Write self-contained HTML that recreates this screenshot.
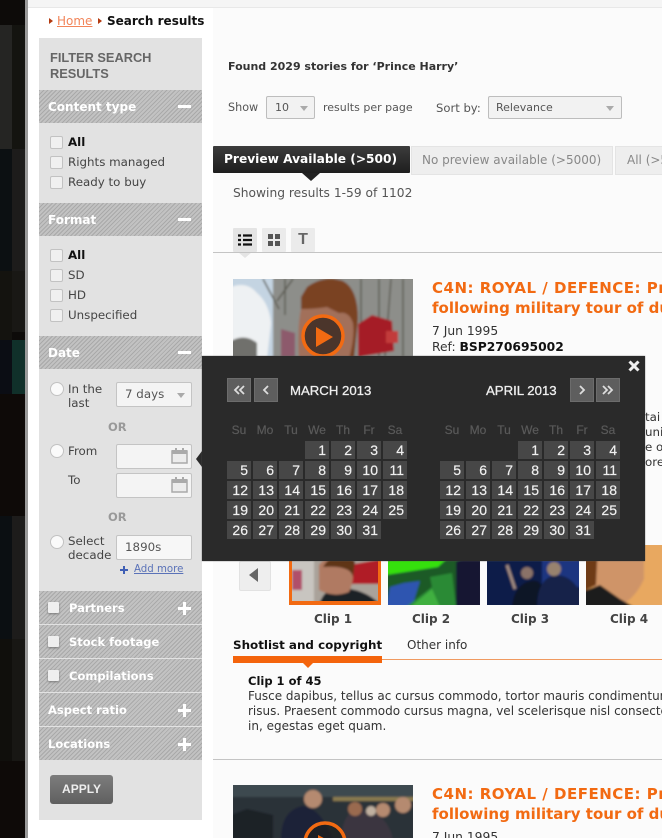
<!DOCTYPE html>
<html><head><meta charset="utf-8"><style>
html,body{margin:0;padding:0;width:662px;height:838px;overflow:hidden;background:#fff}
body{position:relative;font-family:"DejaVu Sans",Verdana,sans-serif;font-size:11.85px;color:#333}
#w{position:absolute;left:0;top:0;width:662px;height:838px;overflow:hidden}
.a{position:absolute;white-space:nowrap}
.b{position:absolute}
.hd{position:absolute;left:39px;width:163px;height:33px;background:#b4b4b4;background-image:repeating-linear-gradient(135deg,#a9a9a9 0 1px,#c2c2c2 1px 3px);color:#fff;font-weight:bold;font-size:12px;line-height:34px}
.hd span{position:absolute;left:9px;white-space:nowrap}
.min{position:absolute;left:139px;top:15px;width:13px;height:3px;background:#fff}
.pl{position:absolute;left:139px;top:16px;width:13px;height:3px;background:#fff}
.pl:after{content:"";position:absolute;left:5px;top:-5px;width:3px;height:13px;background:#fff}
.cb{position:absolute;left:50px;width:11px;height:11px;background:#f0f0f0;border:1px solid #c2c2c2;border-radius:2px}
.cb2{position:absolute;left:9px;top:11px;width:11px;height:11px;background:#efefef;border-radius:1px;box-shadow:0 1px 2px #777}
.rd{position:absolute;left:50px;width:12px;height:12px;background:#fafafa;border:1px solid #c2c2c2;border-radius:50%}
.inp{position:absolute;left:116px;width:74px;height:23px;background:#f4f4f4;border:1px solid #c4c4c4;border-radius:2px;line-height:23px;text-indent:8px;color:#555;font-size:11.85px}
.tri{position:absolute;width:0;height:0;border-left:4.5px solid transparent;border-right:4.5px solid transparent;border-top:5px solid #aaa}
.or{position:absolute;left:108px;color:#999;font-weight:bold;font-size:11.5px}
.cal{position:absolute;left:54px;top:3px}
.sel{position:absolute;background:#f2f2f2;border:1px solid #bdbdbd;border-radius:2px;color:#555;height:21px;line-height:22px;font-size:11px}
.tab{position:absolute;top:146px;height:27px;background:#eee;border:1px solid #e4e4e4;color:#888;font-size:12px;line-height:27px;text-align:left;white-space:nowrap;overflow:hidden}
.vb{position:absolute;top:228px;width:24px;height:24px;background:#ebebeb;border-radius:1px}
.ttl{color:#f26a12;font-weight:bold;font-size:15px;line-height:20px}
.ttl span{letter-spacing:.5px}
.pop{position:absolute;left:202px;top:356px;width:443px;height:205px;background:#2a2a2a;box-shadow:0 0 1px #555;font-family:"Liberation Sans",sans-serif}
.nb{position:absolute;top:22px;width:22px;height:22px;background:#5e5e5e;border:1px solid #6c6c6c}
.nb svg{position:absolute;left:0;top:0}
.mt{position:absolute;top:27px;color:#eee;font-size:13.2px;line-height:16px;white-space:nowrap;-webkit-text-stroke:.3px #eee}
.dh{position:absolute;top:67px;display:grid;grid-template-columns:repeat(7,24px);column-gap:2px;color:#5a5a5a;font-size:12px;text-align:center;line-height:14px;-webkit-text-stroke:.2px #5a5a5a}
.g{position:absolute;top:85px;display:grid;grid-template-columns:repeat(7,24px);grid-auto-rows:18px;gap:2px;color:#f0f0f0;font-size:14px;line-height:18px;text-align:right;-webkit-text-stroke:.2px #f0f0f0}
.g div{background:#474747;padding-right:3px;box-sizing:border-box}
.cl{position:absolute;top:612px;color:#444;font-weight:bold;font-size:12px;white-space:nowrap}
</style></head><body><div id="w">

<svg width="0" height="0" style="position:absolute"><filter id="s"><feGaussianBlur stdDeviation="1"/></filter></svg>

<!-- dark background strip -->
<div class="b" style="left:0;top:0;width:25px;height:838px;background:#0d0b09"></div>
<div class="b" style="left:0;top:25px;width:12px;height:124px;background:#252523"></div>
<div class="b" style="left:12px;top:25px;width:13px;height:124px;background:#141410"></div>
<div class="b" style="left:0;top:149px;width:12px;height:122px;background:#0c1012"></div>
<div class="b" style="left:12px;top:149px;width:13px;height:122px;background:#1d1c1b"></div>
<div class="b" style="left:0;top:271px;width:12px;height:123px;background:#14130f"></div>
<div class="b" style="left:12px;top:271px;width:13px;height:61px;background:#191815"></div>
<div class="b" style="left:0;top:340px;width:12px;height:54px;background:#0b0d14"></div>
<div class="b" style="left:12px;top:340px;width:13px;height:54px;background:#10302a"></div>
<div class="b" style="left:0;top:394px;width:25px;height:122px;background:#0e0a08"></div>
<div class="b" style="left:0;top:516px;width:12px;height:123px;background:#0b0f12"></div>
<div class="b" style="left:12px;top:516px;width:13px;height:123px;background:#1d1c1b"></div>
<div class="b" style="left:0;top:639px;width:25px;height:122px;background:#100f0c"></div>
<div class="b" style="left:12px;top:639px;width:13px;height:122px;background:#181714"></div>
<div class="b" style="left:0;top:761px;width:25px;height:77px;background:#0e0a08"></div>
<div class="b" style="left:25px;top:0;width:3px;height:838px;background:#9a9a9a"></div>

<!-- page -->
<div class="b" style="left:28px;top:0;width:634px;height:7px;background:#f5f5f5;border-bottom:1px solid #e8e8e8"></div>
<div class="b" style="left:213px;top:8px;width:449px;height:830px;background:#fbfbfb"></div>

<!-- breadcrumb -->
<div class="b" style="left:49px;top:18px;width:0;height:0;border-left:4px solid #b33a10;border-top:3.5px solid transparent;border-bottom:3.5px solid transparent"></div>
<div class="a" style="left:57px;top:14px;color:#f2855a;font-size:12px;text-decoration:underline">Home</div>
<div class="b" style="left:98px;top:18px;width:0;height:0;border-left:4px solid #b33a10;border-top:3.5px solid transparent;border-bottom:3.5px solid transparent"></div>
<div class="a" style="left:107px;top:14px;color:#111;font-weight:bold;font-size:12px">Search results</div>

<!-- sidebar -->
<div class="b" style="left:39px;top:38px;width:163px;height:782px;background:#e2e2e2"></div>
<div class="a" style="left:50px;top:50px;color:#666;font-weight:bold;font-size:12.8px;line-height:16px;font-family:'Liberation Sans',sans-serif">FILTER SEARCH<br>RESULTS</div>

<div class="hd" style="top:90px"><span>Content type</span><i class="min"></i></div>
<div class="cb" style="top:136px"></div><div class="a" style="left:68px;top:135px;color:#111;font-weight:bold">All</div>
<div class="cb" style="top:156px"></div><div class="a" style="left:68px;top:155px;color:#444">Rights managed</div>
<div class="cb" style="top:176px"></div><div class="a" style="left:68px;top:175px;color:#444">Ready to buy</div>

<div class="hd" style="top:203px"><span>Format</span><i class="min"></i></div>
<div class="cb" style="top:249px"></div><div class="a" style="left:68px;top:248px;color:#111;font-weight:bold">All</div>
<div class="cb" style="top:269px"></div><div class="a" style="left:68px;top:268px;color:#444">SD</div>
<div class="cb" style="top:289px"></div><div class="a" style="left:68px;top:288px;color:#444">HD</div>
<div class="cb" style="top:309px"></div><div class="a" style="left:68px;top:308px;color:#444">Unspecified</div>

<div class="hd" style="top:336px"><span>Date</span><i class="min"></i></div>
<div class="rd" style="top:382px"></div>
<div class="a" style="left:68px;top:382px;color:#444;line-height:14px">In the<br>last</div>
<div class="inp" style="top:382px">7 days<i class="tri" style="left:60px;top:10px"></i></div>
<div class="or" style="top:420px">OR</div>
<div class="rd" style="top:444px"></div>
<div class="a" style="left:68px;top:444px;color:#444">From</div>
<div class="inp" style="top:444px"><svg class="cal" width="17" height="16"><path d="M1 3h15v12H1z" fill="#ececec" stroke="#aaa" stroke-width="1.5"/><path d="M1 2h15v4H1z" fill="#aaa"/><path d="M4 0h2v3H4zM11 0h2v3h-2z" fill="#aaa"/></svg></div>
<div class="a" style="left:68px;top:473px;color:#444">To</div>
<div class="inp" style="top:473px"><svg class="cal" width="17" height="16"><path d="M1 3h15v12H1z" fill="#ececec" stroke="#aaa" stroke-width="1.5"/><path d="M1 2h15v4H1z" fill="#aaa"/><path d="M4 0h2v3H4zM11 0h2v3h-2z" fill="#aaa"/></svg></div>
<div class="or" style="top:510px">OR</div>
<div class="rd" style="top:535px"></div>
<div class="a" style="left:68px;top:534px;color:#444;line-height:14px">Select<br>decade</div>
<div class="inp" style="top:535px;background:#f7f7f7">1890s</div>
<svg class="b" style="left:119px;top:565px" width="10" height="10"><path d="M1 5h8M5 1v8" stroke="#3f5fb5" stroke-width="2"/></svg>
<div class="a" style="left:134px;top:564px;color:#5a72b8;font-size:10.2px;text-decoration:underline">Add more</div>

<div class="hd" style="top:591px"><i class="cb2"></i><span style="left:30px;font-size:11.5px">Partners</span><i class="pl"></i></div>
<div class="hd" style="top:625px"><i class="cb2"></i><span style="left:30px;font-size:11.5px">Stock footage</span></div>
<div class="hd" style="top:659px"><i class="cb2"></i><span style="left:30px;font-size:11.5px">Compilations</span></div>
<div class="hd" style="top:693px"><span style="font-size:11.5px">Aspect ratio</span><i class="pl"></i></div>
<div class="hd" style="top:727px"><span style="font-size:11.5px">Locations</span><i class="pl"></i></div>
<div class="b" style="left:50px;top:775px;width:63px;height:29px;background:linear-gradient(#7d7d7d,#5f5f5f);border-radius:3px;color:#eee;font:bold 12px/28px 'Liberation Sans',sans-serif;text-align:center">APPLY</div>

<!-- main top -->
<div class="a" style="left:228px;top:60px;color:#333;font-weight:bold;font-size:11px">Found 2029 stories for ‘Prince Harry’</div>
<div class="a" style="left:228px;top:101px;color:#555;font-size:11.2px">Show</div>
<div class="sel" style="left:266px;top:96px;width:47px;text-indent:8px">10<i class="tri" style="left:33px;top:9px"></i></div>
<div class="a" style="left:323px;top:101px;color:#555;font-size:11px">results per page</div>
<div class="a" style="left:436px;top:101px;color:#555;font-size:11.6px">Sort by:</div>
<div class="sel" style="left:488px;top:96px;width:132px;text-indent:7px">Relevance<i class="tri" style="left:117px;top:9px"></i></div>

<div class="b" style="left:213px;top:146px;width:197px;height:27px;background:linear-gradient(#3c3c3c,#1e1e1e);border-radius:1px;color:#fff;font-weight:bold;font-size:12.2px;line-height:27px;text-indent:11px;white-space:nowrap">Preview Available (&gt;500)</div>
<div class="b" style="left:302px;top:173px;width:0;height:0;border-left:9px solid transparent;border-right:9px solid transparent;border-top:8px solid #222"></div>
<div class="tab" style="left:411px;width:200px;text-indent:10px">No preview available (&gt;5000)</div>
<div class="tab" style="left:615px;width:46px;text-indent:11px;border-right:0">All (&gt;5000)</div>
<div class="a" style="left:233px;top:186px;color:#555;font-size:12.25px">Showing results 1-59 of 1102</div>

<div class="vb" style="left:233px;background:#e4e4e4">
  <svg width="24" height="24"><path d="M5 7.5h3M10 7.5h9M5 12h3M10 12h9M5 16.5h3M10 16.5h9" stroke="#111" stroke-width="2.2"/></svg>
</div>
<div class="b" style="left:238px;top:252px;width:0;height:0;border-left:7px solid transparent;border-right:7px solid transparent;border-top:6px solid #e4e4e4"></div>
<div class="vb" style="left:262px"><svg width="24" height="24"><path d="M6 6h5v5H6zM13 6h5v5h-5zM6 13h5v5H6zM13 13h5v5h-5z" fill="#555"/></svg></div>
<div class="vb" style="left:291px;color:#666;font:bold 16px/24px 'Liberation Sans',sans-serif;text-align:center">T</div>
<div class="b" style="left:213px;top:252px;width:449px;height:1px;background:#c4c4c4"></div>

<!-- result 1 -->
<svg class="b" style="left:233px;top:279px" width="180" height="78" viewBox="0 0 180 78">
<rect width="180" height="78" fill="#8d8e8a"/>
<g filter="url(#s)">
<rect width="180" height="78" fill="#8d8e8a"/>
<path d="M-2-2h42v82H-2z" fill="#c4d4e2"/>
<path d="M-2 8q16-6 26 6q12 10 14 30L34 80H-2z" fill="#eef1f3"/>
<path d="M-2 62q14-8 26 2v16H-2z" fill="#70706c"/>
<path d="M30 0l16 30M52 0v36M60 0L44 22M128 0v78M146 0v78M158 0l-6 78M170 0v78" stroke="#5c5c52" stroke-width="1.5" fill="none"/>
<path d="M48 50l14 4v24H48z" fill="#8d5a6c"/>
<path d="M125 45l14-9 20 6 2 30-36 6z" fill="#a51f25"/>
<rect x="153" y="52" width="12" height="12" fill="#c23a3a"/>
<path d="M68 80V18L74 8Q90-4 110 2Q125 10 125 40l-4 40z" fill="#7a4320"/>
<path d="M68 30q-4 20-2 50h50q6-22 4-36-4-12-14-10l-12-6q-12 2-26 2z" fill="#a2705a"/>
</g>
<circle cx="90" cy="57" r="20" fill="#2d211c" fill-opacity=".75" stroke="#f26a12" stroke-width="3.5"/>
<path d="M83 48l17 10-17 10z" fill="#f26a12"/>
</svg>
<div class="a ttl" style="left:432px;top:278px"><span>C4N: ROYAL / DEFENCE: Prince Harry</span><br>following military tour of duty</div>
<div class="a" style="left:432px;top:324px;color:#333;font-size:12.3px">7 Jun 1995</div>
<div class="a" style="left:432px;top:340px;color:#333;font-size:12.3px">Ref: <b style="color:#111">BSP270695002</b></div>

<div class="a" style="left:645px;top:410px;color:#333">tai</div>
<div class="a" style="left:645px;top:425px;color:#333">uni</div>
<div class="a" style="left:645px;top:440px;color:#333">e o</div>
<div class="a" style="left:645px;top:455px;color:#333">ore</div>

<!-- clips -->
<div class="b" style="left:239px;top:561px;width:30px;height:28px;background:#eee;border:1px solid #e2e2e2;border-radius:2px"></div>
<div class="b" style="left:249px;top:568px;width:0;height:0;border-right:9px solid #666;border-top:7.5px solid transparent;border-bottom:7.5px solid transparent"></div>

<svg class="b" style="left:289px;top:545px" width="92" height="60" viewBox="0 0 92 60">
<rect width="92" height="60" fill="#f26a12"/>
<svg x="3" y="3" width="86" height="53" viewBox="3 3 86 53"><g filter="url(#s)">
<rect x="0" y="0" width="92" height="60" fill="#a9a29a"/>
<path d="M0 0h25v60H0z" fill="#c8c5c0"/><path d="M3 25h10v20H3z" fill="#b0506a"/><path d="M60 20l32-6v25H60z" fill="#b01e28"/>
<path d="M30 60q5-17 20-17q25 0 42 17z" fill="#1c2228"/>
<path d="M30 45V20q15-18 30-5 8 15 0 32-15 6-30-2z" fill="#b07a62"/><path d="M34 22q12-20 32-6l-2 16q-2-12-30-10z" fill="#5e3418"/>
</g></svg>
</svg>
<svg class="b" style="left:388px;top:545px" width="92" height="60" viewBox="0 0 92 60"><g filter="url(#s)">
<rect x="-2" y="-2" width="96" height="64" fill="#1c5a26"/><path d="M-2-2h78L50 22-2 30z" fill="#36e010"/>
<path d="M-2 62l4-20 14-4 16-2-8 26z" fill="#2f55b0"/><path d="M18 62l26-20-2-10 22-4 4 34z" fill="#2c8a36"/><path d="M22 62l22-18 8 18z" fill="#3fb040"/>
<path d="M68 62V17q10-6 26-2v47z" fill="#141830"/></g>
</svg>
<svg class="b" style="left:487px;top:545px" width="92" height="60" viewBox="0 0 92 60"><g filter="url(#s)">
<rect x="-2" y="-2" width="96" height="64" fill="#0a1a48"/><rect x="55" y="-2" width="39" height="44" fill="#1a3580"/>
<path d="M25 62q2-22 18-26t14 26z" fill="#101626"/><path d="M50 62q0-28 18-32 18 0 26 20v12z" fill="#12204a"/>
<circle cx="40" cy="28" r="6" fill="#8a7268"/><circle cx="67" cy="24" r="7" fill="#98826e"/><path d="M20 20l8 24" stroke="#a08a80" stroke-width="3"/></g>
</svg>
<svg class="b" style="left:586px;top:545px" width="76" height="60" viewBox="0 0 76 60"><g filter="url(#s)">
<rect x="-2" y="-2" width="80" height="64" fill="#e8a860"/><path d="M8 62V-2h50v36Q50 52 36 60z" fill="#cf9468"/>
<path d="M-2 62V46l16-6 20 14 14 8z" fill="#1c1c1a"/><path d="M-2 46V-2h14l-2 42z" fill="#6e3a14"/></g>
</svg>
<div class="cl" style="left:314px">Clip 1</div>
<div class="cl" style="left:412px">Clip 2</div>
<div class="cl" style="left:511px">Clip 3</div>
<div class="cl" style="left:610px">Clip 4</div>

<!-- tabs -->
<div class="a" style="left:233px;top:638px;color:#111;font-weight:bold;font-size:11.9px">Shotlist and copyright</div>
<div class="a" style="left:407px;top:638px;color:#333;font-size:12px">Other info</div>
<div class="b" style="left:382px;top:659px;width:280px;height:1px;background:#f09a60"></div>
<div class="b" style="left:233px;top:656px;width:149px;height:7px;background:#f4640c"></div>
<div class="b" style="left:303px;top:663px;width:0;height:0;border-left:5px solid transparent;border-right:5px solid transparent;border-top:5px solid #f4640c"></div>

<div class="a" style="left:248px;top:674px;color:#111;font-weight:bold;font-size:11.5px">Clip 1 of 45</div>
<div class="a" style="left:248px;top:689px;color:#333;line-height:15px;font-size:12px">Fusce dapibus, tellus ac cursus commodo, tortor mauris condimentum<br>risus. Praesent commodo cursus magna, vel scelerisque nisl consectetur<br>in, egestas eget quam.</div>
<div class="b" style="left:213px;top:759px;width:449px;height:1px;background:#c4c4c4"></div>

<!-- result 2 -->
<svg class="b" style="left:233px;top:785px" width="180" height="53" viewBox="0 0 180 53">
<g filter="url(#s)">
<rect x="-2" y="-2" width="184" height="57" fill="#2a3338"/><rect x="-2" y="-2" width="184" height="14" fill="#3c4a50"/><path d="M100 12h82v4h-82z" fill="#8a7a50"/>
<path d="M48 55q0-30 22-34 18 2 30 34z" fill="#1c2238"/><circle cx="80" cy="14" r="9" fill="#b58a70"/>
<path d="M108 55q2-28 16-30 30 0 36 30z" fill="#3a3640"/><circle cx="122" cy="24" r="7" fill="#9a6a50"/><circle cx="150" cy="25" r="7" fill="#b58a70"/><circle cx="170" cy="20" r="8" fill="#b58a70"/><circle cx="138" cy="26" r="5" fill="#c0b0a0"/>
<path d="M-2 55V30l16-6 26 6v25z" fill="#1c2226"/>
</g>
<circle cx="92" cy="58" r="20" fill="#1e1e1e" fill-opacity=".7" stroke="#f26a12" stroke-width="3.5"/>
<path d="M85 50l15 8h-15z" fill="#f26a12"/>
</svg>
<div class="a ttl" style="left:432px;top:784px"><span>C4N: ROYAL / DEFENCE: Prince Harry</span><br>following military tour of duty</div>
<div class="a" style="left:432px;top:830px;color:#333;font-size:12.3px">7 Jun 1995</div>

<!-- calendar popup -->
<div class="b" style="left:196px;top:451px;width:0;height:0;border-right:6px solid #2a2a2a;border-top:8px solid transparent;border-bottom:8px solid transparent"></div>
<div class="pop">
  <svg class="b" style="left:425px;top:3px" width="14" height="14"><path d="M2.5 2.5l9 9M11.5 2.5l-9 9" stroke="#eee" stroke-width="3"/></svg>
  <div class="nb" style="left:25px"><svg width="22" height="22"><path d="M11 7l-4 4 4 4M16 7l-4 4 4 4" stroke="#ddd" stroke-width="1.8" fill="none"/></svg></div>
  <div class="nb" style="left:52px"><svg width="22" height="22"><path d="M13 7l-4 4 4 4" stroke="#ddd" stroke-width="1.8" fill="none"/></svg></div>
  <div class="mt" style="left:88px">MARCH 2013</div>
  <div class="mt" style="left:284px">APRIL 2013</div>
  <div class="nb" style="left:368px"><svg width="22" height="22"><path d="M9 7l4 4-4 4" stroke="#ddd" stroke-width="1.8" fill="none"/></svg></div>
  <div class="nb" style="left:394px"><svg width="22" height="22"><path d="M6 7l4 4-4 4M11 7l4 4-4 4" stroke="#ddd" stroke-width="1.8" fill="none"/></svg></div>

  <div class="dh" style="left:25px"><span>Su</span><span>Mo</span><span>Tu</span><span>We</span><span>Th</span><span>Fr</span><span>Sa</span></div>
  <div class="g" style="left:25px"><div style="grid-column-start:4">1</div><div>2</div><div>3</div><div>4</div><div>5</div><div>6</div><div>7</div><div>8</div><div>9</div><div>10</div><div>11</div><div>12</div><div>13</div><div>14</div><div>15</div><div>16</div><div>17</div><div>18</div><div>19</div><div>20</div><div>21</div><div>22</div><div>23</div><div>24</div><div>25</div><div>26</div><div>27</div><div>28</div><div>29</div><div>30</div><div>31</div></div>

  <div class="dh" style="left:238px"><span>Su</span><span>Mo</span><span>Tu</span><span>We</span><span>Th</span><span>Fr</span><span>Sa</span></div>
  <div class="g" style="left:238px"><div style="grid-column-start:4">1</div><div>2</div><div>3</div><div>4</div><div>5</div><div>6</div><div>7</div><div>8</div><div>9</div><div>10</div><div>11</div><div>12</div><div>13</div><div>14</div><div>15</div><div>16</div><div>17</div><div>18</div><div>19</div><div>20</div><div>21</div><div>22</div><div>23</div><div>24</div><div>25</div><div>26</div><div>27</div><div>28</div><div>29</div><div>30</div><div>31</div></div>
</div>
</div></body></html>
